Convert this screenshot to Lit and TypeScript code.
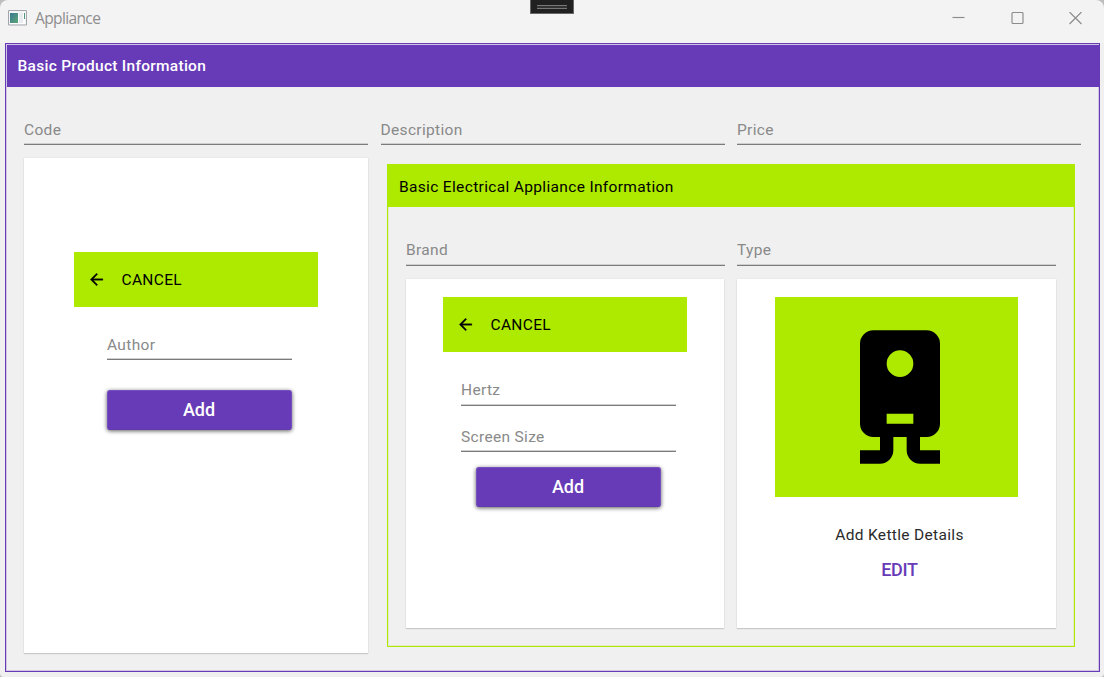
import { LitElement, html, css, svg } from "lit";
import { customElement, property } from "lit/decorators.js";

@customElement("text-field")
class TextField extends LitElement {
  static styles = css`
    :host { display: block; box-sizing: border-box; height: 29px; border-bottom: 1px solid #7b7b7b;
      box-shadow: inset 0 -1px #cfcfcf; color: #898989; font: 400 15.5px/28px Roboto, sans-serif; letter-spacing: .33px; white-space: nowrap; }
    :host(.raised) { line-height: 26px; }
    .label { display: block; height: 28px; }
  `;
  @property() label = "";
  render() { return html`<span class="label">${this.label}</span>`; }
}

@customElement("raised-button")
class RaisedButton extends LitElement {
  static styles = css`
    :host { display: block; width: 185px; height: 40px; }
    .button { display: block; width: 100%; height: 100%; padding: 0; border: 1px solid #7650c0; border-bottom-color: #6239ae;
      border-radius: 3px; background: #673ab7; color: #fff; box-shadow: 0 1px 4px rgba(0,0,0,.65);
      font: 500 18px/38px Roboto, sans-serif; letter-spacing: -.1px; }
  `;
  render() { return html`<button class="button"><slot></slot></button>`; }
}

@customElement("cancel-bar")
class CancelBar extends LitElement {
  static styles = css`
    :host { display: flex; align-items: center; box-sizing: border-box; width: 244px; height: 55px; padding-left: 13px;
      background: #aeea00; color: #000; font: 400 15.5px/20px Roboto, sans-serif; letter-spacing: .33px; }
    .arrow { width: 19px; height: 19px; margin-right: 15.5px; stroke: #000; stroke-width: .4; }
  `;
  render() {
    return html`<svg class="arrow" viewBox="0 0 24 24"><path d="M20 11V13H8L13.5 18.5L12.08 19.92L4.16 12L12.08 4.08L13.5 5.5L8 11H20Z"/></svg><span>CANCEL</span>`;
  }
}

const boiler = svg`<path fill-rule="evenodd" d="M8 2H16A2 2 0 0 1 18 4V16A2 2 0 0 1 16 18H15V20H18V22H15A2 2 0 0 1 13 20V18H11V20A2 2 0 0 1 9 22H6V20H9V18H8A2 2 0 0 1 6 16V4A2 2 0 0 1 8 2ZM12 5A2 2 0 0 0 12 9A2 2 0 0 0 12 5ZM10 14.5V16H14V14.5Z"/>`;

@customElement("app-root")
class AppRoot extends LitElement {
  static styles = css`
    :host { display: block; width: 1104px; height: 677px; background: #bdbdbd; overflow: hidden; font-family: Roboto, sans-serif; }
    * { box-sizing: border-box; }
    .window { position: relative; height: 677px; padding: 0 4px 5px 5px; border-radius: 8px 8px 4px 4px;
      background: linear-gradient(#f3f3f3 0 43px, #f0f0f0 43px); }
    .titlebar { display: flex; align-items: center; height: 43px; padding: 0 17px 7px 3px; color: #8e8e8e; }
    .app-icon { width: 19px; height: 16px; margin-right: 8px; }
    .title { flex: 1; font: 400 15.5px/20px "Open Sans", sans-serif; letter-spacing: -.62px; }
    .controls { display: flex; gap: 45.5px; margin-right: 1px; }
    .controls svg { width: 13px; height: 13px; fill: none; stroke: #8c8c8c; stroke-width: 1.15; }
    .grip { position: absolute; left: 530px; top: 0; width: 44px; height: 14px; border: 1px solid #666; border-top: 0; background: #202020; padding: 5px 6px; }
    .grip-bars { height: 4px; border: solid #777; border-width: 1px 0; background: #333; }
    .group { border: 1px solid #673ab7; box-shadow: inset 0 0 0 1px #d0c5e2; }
    .product { height: 629px; width: 1095px; padding-top: 1px; }
    .header { display: block; margin: 0; height: 42px; padding-left: 10.5px; background: #673ab7; color: #fff; font: 500 15.5px/42px Roboto, sans-serif; letter-spacing: .28px; }
    .product > .header { margin: 0 -1px 0 1px; }
    .fields { display: grid; grid-template-columns: 344px 344px 344px; column-gap: 12.5px; padding: 29px 18px 13px; }
    .main { display: flex; padding-left: 18px; align-items: flex-start; }
    .card { background: #fff; box-shadow: 0 1px 1px rgba(0,0,0,.14), 0 0 2px rgba(0,0,0,.08); }
    .author { width: 344px; height: 495px; padding: 94px 50px 0; }
    .author text-field { width: 185px; margin: 24px 0 0 33px; }
    .author raised-button { margin: 30px 0 0 32.5px; }
    .appliance { width: 688px; height: 483px; margin: 6px 0 0 19px; border-color: #aeea00; box-shadow: inset 0 0 0 1px #e2eac7; }
    .appliance .header { height: 43px; margin: -1px -1px 0; padding-left: 12px; background: #aeea00; color: #000; font-weight: 400; line-height: 46px; letter-spacing: .34px; }
    .columns { display: grid; grid-template-columns: 319px 319px; column-gap: 12px; padding: 30px 18px 0; }
    .columns .card { height: 349px; margin-top: 13px; }
    .screen { width: 318px; padding: 18px 37px; }
    .screen text-field { width: 215px; margin: 25px 0 0 18px; }
    .screen text-field + text-field { margin-top: 17px; }
    .screen raised-button { margin: 15px 0 0 32.5px; }
    .kettle { padding: 18px 38px; text-align: center; }
    .picture { display: grid; place-items: center; width: 243px; height: 200px; background: #aeea00; }
    .picture svg { width: 160px; height: 160px; margin-left: 7px; }
    .caption { margin-top: 28px; padding-left: 6px; color: #2b2b2b; font: 400 15.5px/20px Roboto, sans-serif; letter-spacing: .33px; white-space: nowrap; }
    .edit { display: block; width: 100%; margin-top: 13px; padding: 0 0 0 6px; border: 0; background: none; color: #673ab7; font: 500 18px/24px Roboto, sans-serif; letter-spacing: -.3px; }
  `;
  render() {
    return html`<div class="window">
      <header class="titlebar">
        <svg class="app-icon" viewBox="0 0 19 16">
          <defs><linearGradient id="screen" x2="1" y2="1"><stop stop-color="#397895"/><stop offset="1" stop-color="#5da575"/></linearGradient></defs>
          <path fill="#f4f4f4" stroke="#a3a7ad" d="M.5.5H18.5V15H.5Z"/><path fill="#fff" d="M2 3H17V14H2Z"/><path fill="url(#screen)" d="M2 3H10V13H2Z"/><path fill="#e8ecf1" d="M11 3H15V13H11Z"/><path fill="#4c9785" d="M16 3H17V9H16Z"/>
        </svg>
        <span class="title">Appliance</span>
        <div class="controls">
          <svg viewBox="0 0 13 13"><path d="M.5 5.5H12.5"/></svg>
          <svg viewBox="0 0 13 13"><rect x="1" y=".5" width="11" height="11" rx="1"/></svg>
          <svg viewBox="0 0 13 13"><path d="M.5 0L12.5 12M12.5 0L.5 12"/></svg>
        </div>
      </header>
      <div class="grip"><div class="grip-bars"></div></div>
      <section class="group product">
        <h1 class="header">Basic Product Information</h1>
        <div class="fields"><text-field label="Code"></text-field><text-field label="Description"></text-field><text-field label="Price"></text-field></div>
        <div class="main">
          <div class="card author"><cancel-bar></cancel-bar><text-field label="Author"></text-field><raised-button>Add</raised-button></div>
          <section class="group appliance">
            <h2 class="header">Basic Electrical Appliance Information</h2>
            <div class="columns">
              <div><text-field class="raised" label="Brand"></text-field>
                <div class="card screen"><cancel-bar></cancel-bar><text-field class="raised" label="Hertz"></text-field><text-field label="Screen Size"></text-field><raised-button>Add</raised-button></div></div>
              <div><text-field class="raised" label="Type"></text-field>
                <div class="card kettle"><div class="picture"><svg viewBox="0 0 24 24">${boiler}</svg></div><div class="caption">Add Kettle Details</div><button class="edit">EDIT</button></div></div>
            </div>
          </section>
        </div>
      </section>
    </div>`;
  }
}
